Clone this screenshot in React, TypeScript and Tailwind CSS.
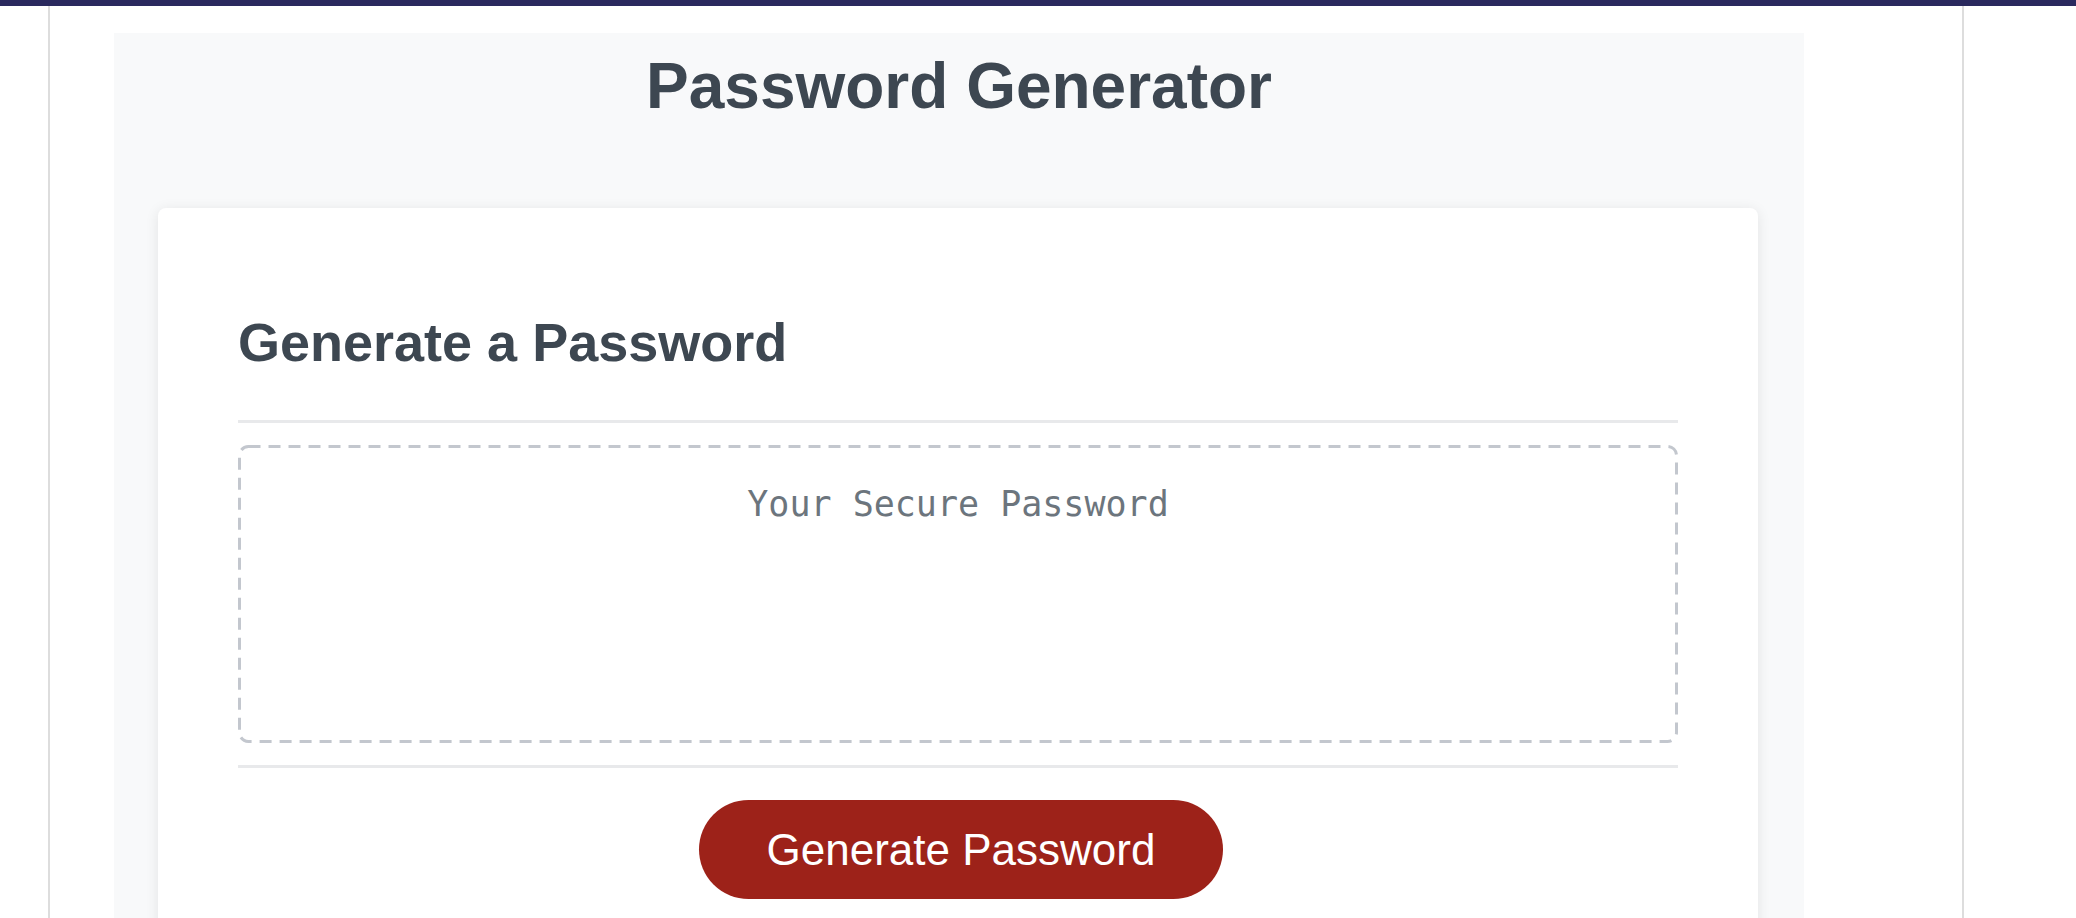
export default function App() {
  return (
    <div className="h-[918px] overflow-hidden bg-white font-['Liberation_Sans',Arial,sans-serif]">
      <div className="h-[6px] bg-[#2a295e]" />
      <div className="ml-[48px] h-[912px] w-[1916px] border-x-2 border-[#dddddd] pl-[64px] pt-[27px]">
        <div className="h-full w-[1690px] bg-[#f8f9fa]">
          <h1 className="pt-[17px] text-center text-[64px] font-bold leading-[72px] text-[#3d4751]">
            Password Generator
          </h1>

          <div className="mx-[44px] mt-[86px] w-[1600px] rounded-lg bg-white px-[80px] pt-[103px] pb-16 shadow-[0_2px_14px_rgba(0,0,0,0.09)]">
            <h2 className="text-[54px] font-bold leading-[62px] text-[#3d4751]">
              Generate a Password
            </h2>

            <hr className="mt-[47px] border-0 border-t-[3px] border-[#e8e9eb]" />

            {/* dashed output box */}
            <div className="relative mt-[22px] h-[298px] pt-[39px] text-center font-['DejaVu_Sans_Mono',monospace] text-[35px] leading-[40px] text-[#6c757d]">
              <svg className="pointer-events-none absolute inset-0" width="1440" height="298">
                <rect
                  x="1.5"
                  y="1.5"
                  width="1437"
                  height="295"
                  rx="9"
                  fill="none"
                  stroke="#c3c7ce"
                  strokeWidth="3"
                  strokeDasharray="12 8"
                />
              </svg>
              Your Secure Password
            </div>

            <hr className="mt-[22px] border-0 border-t-[3px] border-[#e8e9eb]" />

            <div className="mt-[32px] flex justify-center pl-[6px]">
              <button
                type="button"
                className="h-[99px] w-[524px] rounded-full bg-[#9d2219] text-[44px] leading-none text-white"
              >
                Generate Password
              </button>
            </div>
          </div>
        </div>
      </div>
    </div>
  )
}
